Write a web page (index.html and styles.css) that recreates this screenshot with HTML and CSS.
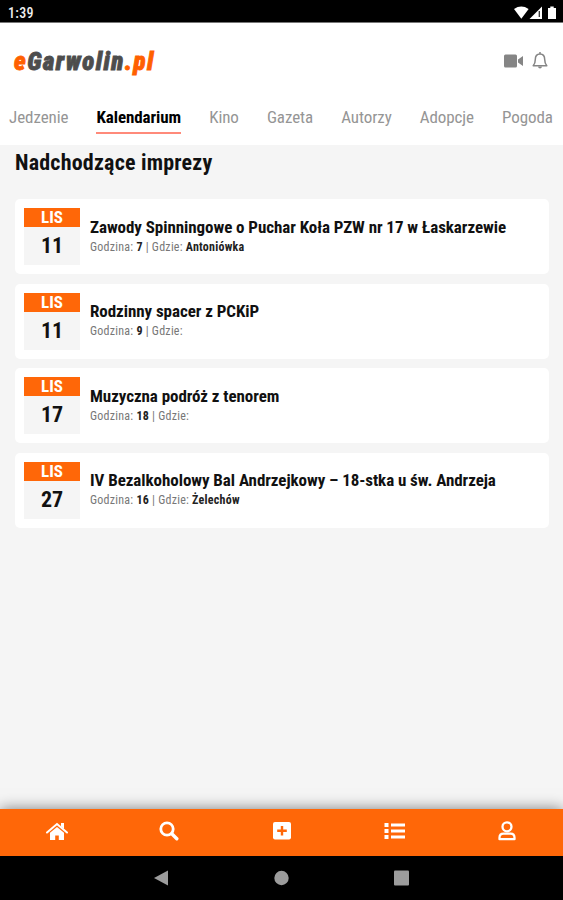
FILE: index.html
```html
<!DOCTYPE html>
<html lang="pl">
<head>
  <meta charset="UTF-8">
  <title>eGarwolin.pl</title>
  <link rel="stylesheet" href="styles.css">
</head>
<body>

  <div class="status-bar">
    <span class="clock">1:39</span>
    <svg class="status-icons" width="44" height="14" viewBox="0 0 44 14">
      <path d="M0 3Q7.300-1.800 14.600 3L7.300 12.800Z" fill="#fff"/>
      <path d="M28 0.500V13H15.500Z" fill="#fff"/>
      <path d="M25.300 5V11" stroke="#333" stroke-width="1.300"/>
      <path d="M34 2h2.300V.500h3.400V2H42v11h-8z" fill="#fff"/>
    </svg>
  </div>

  <header class="header">
    <div class="logo"><span class="accent">e</span>Garwolin<span class="accent">.pl</span></div>
    <div class="header-icons">
      <svg width="20" height="14" viewBox="0 0 20 14">
        <path d="M1.500 .5h10Q13 .5 13 2v10q0 1.500-1.500 1.500h-10Q0 13.500 0 12V2Q0 .5 1.500 .5ZM14 5.500 19 2v10L14 8.500z" fill="#858585"/>
      </svg>
      <svg width="16" height="18" viewBox="0 0 16 18">
        <path d="M8 0V2M1.200 13.700Q3.300 11.500 3.300 7.500Q3.300 2 8 2T12.700 7.500Q12.700 11.500 14.800 13.700Z" fill="none" stroke="#858585" stroke-width="1.500" stroke-linejoin="round"/>
        <path d="M6 14.500h4q-.3 2-2 2t-2-2z" fill="#858585"/>
      </svg>
    </div>
  </header>

  <nav class="tabs">
    <a>Jedzenie</a>
    <a class="active">Kalendarium</a>
    <a>Kino</a>
    <a>Gazeta</a>
    <a>Autorzy</a>
    <a>Adopcje</a>
    <a>Pogoda</a>
  </nav>

  <main class="content">
    <h1>Nadchodzące imprezy</h1>

    <div class="event">
      <div class="date"><div class="month">LIS</div><div class="day">11</div></div>
      <div class="info">
        <h2>Zawody Spinningowe o Puchar Koła PZW nr 17 w Łaskarzewie</h2>
        <p>Godzina: <b>7</b> | Gdzie: <b>Antoniówka</b></p>
      </div>
    </div>

    <div class="event">
      <div class="date"><div class="month">LIS</div><div class="day">11</div></div>
      <div class="info">
        <h2>Rodzinny spacer z PCKiP</h2>
        <p>Godzina: <b>9</b> | Gdzie:</p>
      </div>
    </div>

    <div class="event">
      <div class="date"><div class="month">LIS</div><div class="day">17</div></div>
      <div class="info">
        <h2>Muzyczna podróż z tenorem</h2>
        <p>Godzina: <b>18</b> | Gdzie:</p>
      </div>
    </div>

    <div class="event">
      <div class="date"><div class="month">LIS</div><div class="day">27</div></div>
      <div class="info">
        <h2>IV Bezalkoholowy Bal Andrzejkowy – 18-stka u św. Andrzeja</h2>
        <p>Godzina: <b>16</b> | Gdzie: <b>Żelechów</b></p>
      </div>
    </div>
  </main>

  <footer class="bottom-nav">
    <a>
      <svg width="22" height="19" viewBox="0 0 22 19">
        <path d="M1 10.500 11 2l10 8.500" fill="none" stroke="#fff" stroke-width="2" stroke-linecap="round"/>
        <path d="M15 1H18v6l-3-2.500z" fill="#fff"/>
        <path d="M4 10.800 11 5l7 5.800V18h-5.200v-4.500H9.200V18H4z" fill="#fff"/>
      </svg>
    </a>
    <a>
      <svg width="20" height="20" viewBox="0 0 20 20">
        <circle cx="8" cy="8" r="6.200" fill="none" stroke="#fff" stroke-width="2.800"/>
        <path d="m12.800 12.800 5 5" stroke="#fff" stroke-width="3.400" stroke-linecap="round"/>
      </svg>
    </a>
    <a>
      <svg width="18" height="18" viewBox="0 0 18 18">
        <rect width="18" height="17.500" rx="2" fill="#fff"/>
        <path d="M9 4v9.600M4.200 8.800h9.600" stroke="#ff6708" stroke-width="2.400"/>
      </svg>
    </a>
    <a>
      <svg width="21" height="18" viewBox="0 0 21 18">
        <path d="M7 3h14M7 9h14M7 15h14" stroke="#fff" stroke-width="2.800"/>
        <path d="M.5 3h4M.5 9h4M.5 15h4" stroke="#fff" stroke-width="4"/>
      </svg>
    </a>
    <a>
      <svg width="18" height="20" viewBox="0 0 18 20">
        <circle cx="9" cy="5.800" r="4.500" fill="none" stroke="#fff" stroke-width="2.300"/>
        <path d="M5.500 12.700h7q4 0 4 4v1.500h-15v-1.500q0-4 4-4z" fill="none" stroke="#fff" stroke-width="2.300" stroke-linejoin="round"/>
      </svg>
    </a>
  </footer>

  <div class="system-nav">
    <svg width="15" height="16" viewBox="0 0 15 16"><path d="M0 8 14 .500v15z" fill="#9c9c9c"/></svg>
    <svg width="15" height="16" viewBox="0 0 15 16"><circle cx="7.500" cy="8" r="7.200" fill="#9c9c9c"/></svg>
    <svg width="15" height="16" viewBox="0 0 15 16"><rect y=".5" width="15" height="15" rx="1" fill="#9c9c9c"/></svg>
  </div>

</body>
</html>
```
FILE: styles.css
```css
* {
  box-sizing: border-box;
}

body {
  font-family: 'Roboto Condensed', Roboto, sans-serif;
  font-stretch: 75%;
  margin: 0;
  height: 100vh;
  display: flex;
  flex-direction: column;
  overflow: hidden;
  background: #f5f5f5;
  color: #111;
}

h1, h2, p {
  margin: 0;
  white-space: nowrap;
}

svg {
  display: block;
}

.status-bar {
  height: 23px;
  padding: 3px 5px 0 8px;
  display: flex;
  align-items: center;
  justify-content: space-between;
  background: #000;
  border-bottom: 1px solid #777;
  color: #eee;
  font-size: 14px;
  font-weight: 500;
  letter-spacing: 0.3px;
}

.header {
  height: 77px;
  padding: 0 15px 0 14px;
  display: flex;
  align-items: center;
  justify-content: space-between;
  background: #fff;
}

.logo {
  font-size: 25px;
  font-weight: 900;
  font-style: italic;
  letter-spacing: 1.450px;
  color: #4d4d4d;
  -webkit-text-stroke: 0.8px;
}

.accent {
  color: #ff6000;
}

.header-icons {
  display: flex;
  align-items: center;
  gap: 8px;
  padding-bottom: 1px;
}

.tabs {
  height: 45px;
  padding: 0 10px 0 9px;
  display: flex;
  justify-content: space-between;
  background: #fff;
  color: #959595;
  font-size: 17px;
  letter-spacing: -0.08px;
}

.tabs a {
  height: 34px;
  line-height: 34px;
}

.tabs .active {
  color: #000;
  font-weight: 700;
  border-bottom: 2px solid #ff8a7a;
}

.content {
  flex: 1;
  padding: 4px 14px 0 15px;
}

h1 {
  margin-bottom: 23px;
  font-size: 22px;
  line-height: 27px;
  font-weight: 700;
  letter-spacing: 0.2px;
}

.event {
  height: 75px;
  margin-bottom: 9.500px;
  padding: 9px;
  display: flex;
  gap: 10px;
  background: #fff;
  border-radius: 5px;
}

.date {
  width: 56px;
  height: 57px;
  background: #f5f5f5;
  text-align: center;
}

.month {
  height: 19px;
  line-height: 19px;
  background: #ff6708;
  color: #fff;
  font-size: 17px;
  font-weight: 700;
}

.day {
  line-height: 38px;
  font-size: 22px;
  font-weight: 700;
}

.info {
  padding-top: 8.500px;
}

h2 {
  font-size: 17px;
  line-height: 20px;
  font-weight: 700;
  letter-spacing: -0.06px;
}

.info p {
  font-size: 12px;
  line-height: 20px;
  letter-spacing: 0.24px;
  color: #777;
}

.info b {
  color: #222;
}

.bottom-nav {
  height: 47px;
  display: flex;
  background: #ff6708;
  box-shadow: 0 0 14px rgba(0, 0, 0, 0.5);
}

.bottom-nav a {
  flex: 1;
  display: flex;
  align-items: center;
  justify-content: center;
  padding: 0 0 3px 1px;
}

.system-nav {
  height: 44px;
  display: flex;
  align-items: center;
  justify-content: center;
  gap: 105px;
  background: #000;
}
```
